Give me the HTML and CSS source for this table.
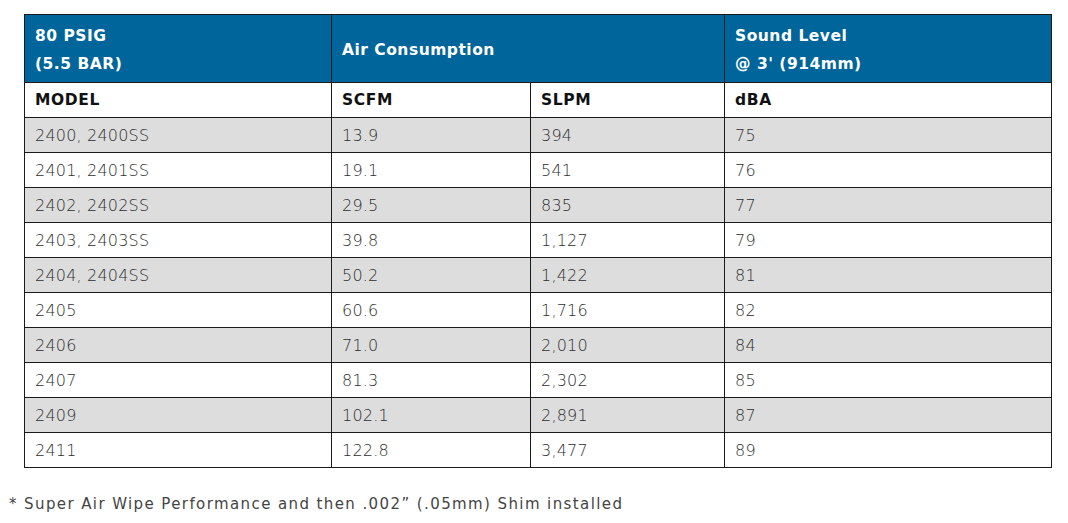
FILE: index.html
```html
<!DOCTYPE html>
<html>
<head>
<meta charset="utf-8">
<link rel="stylesheet" href="styles.css">
</head>
<body>
<div class="page">
<table class="spec">
  <colgroup>
    <col class="c1"><col class="c2"><col class="c3"><col class="c4">
  </colgroup>
  <thead>
    <tr class="top">
      <th>80 PSIG<br>(5.5 BAR)</th>
      <th colspan="2">Air Consumption</th>
      <th>Sound Level<br>@ 3' (914mm)</th>
    </tr>
    <tr class="sub">
      <th>MODEL</th><th>SCFM</th><th>SLPM</th><th>dBA</th>
    </tr>
  </thead>
  <tbody>
    <tr class="alt"><td>2400, 2400SS</td><td>13.9</td><td>394</td><td>75</td></tr>
    <tr><td>2401, 2401SS</td><td>19.1</td><td>541</td><td>76</td></tr>
    <tr class="alt"><td>2402, 2402SS</td><td>29.5</td><td>835</td><td>77</td></tr>
    <tr><td>2403, 2403SS</td><td>39.8</td><td>1,127</td><td>79</td></tr>
    <tr class="alt"><td>2404, 2404SS</td><td>50.2</td><td>1,422</td><td>81</td></tr>
    <tr><td>2405</td><td>60.6</td><td>1,716</td><td>82</td></tr>
    <tr class="alt"><td>2406</td><td>71.0</td><td>2,010</td><td>84</td></tr>
    <tr><td>2407</td><td>81.3</td><td>2,302</td><td>85</td></tr>
    <tr class="alt"><td>2409</td><td>102.1</td><td>2,891</td><td>87</td></tr>
    <tr><td>2411</td><td>122.8</td><td>3,477</td><td>89</td></tr>
  </tbody>
</table>
<p class="note">* Super Air Wipe Performance and then .002” (.05mm) Shim installed</p>
</div>
</body>
</html>
```
FILE: styles.css
```css
html, body {
  margin: 0;
  padding: 0;
  background: #ffffff;
}
.page {
  padding: 14px 17px 0 24px;
}
.spec {
  border-collapse: collapse;
  width: 1027px;
  table-layout: fixed;
  font-family: "DejaVu Sans", sans-serif;
}
.c1 { width: 307px; }
.c2 { width: 199px; }
.c3 { width: 194px; }
.c4 { width: 327px; }
.spec th, .spec td {
  border: 1px solid #1a1a1a;
  text-align: left;
  padding: 0 0 0 10px;
  vertical-align: middle;
}
.top {
  height: 68px;
}
.top th {
  background: #00659a;
  color: #ffffff;
  font-size: 15.5px;
  font-weight: bold;
  line-height: 28px;
  letter-spacing: 0.5px;
  padding-top: 2px;
}
.sub th {
  height: 34px;
  color: #111111;
  font-size: 15.5px;
  font-weight: bold;
  letter-spacing: 0.6px;
}
.spec td {
  height: 34px;
  color: #2e2e2e;
  font-size: 16px;
  font-weight: 200;
  letter-spacing: 0.2px;
}
.alt td {
  background: #dddddd;
}
.note {
  margin: 27px 0 0 -15px;
  font-family: "DejaVu Sans", sans-serif;
  font-size: 15px;
  letter-spacing: 1.4px;
  color: #444444;
}
```
